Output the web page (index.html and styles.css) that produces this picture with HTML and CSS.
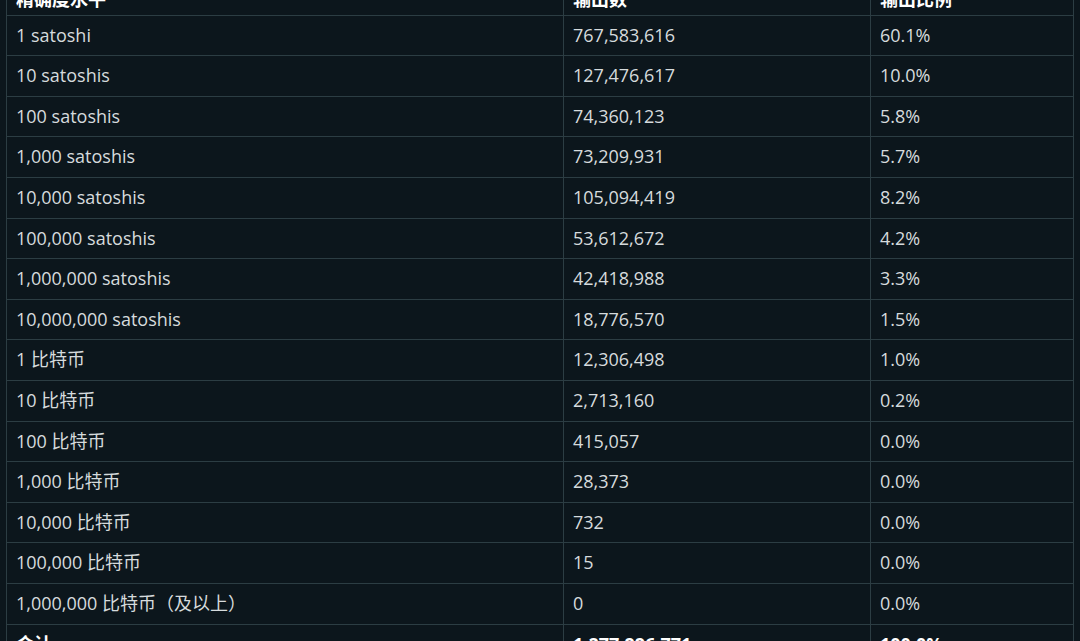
FILE: index.html
```html
<!DOCTYPE html>
<html lang="zh-CN">
<head>
    <meta charset="UTF-8">
    <meta name="viewport" content="width=device-width, initial-scale=1.0">
    <title>输出分布</title>
    <link rel="stylesheet" href="styles.css">
</head>
<body>
    <table class="outputs">
        <thead>
            <tr>
                <th class="col-size">精确度水平</th>
                <th class="col-count">输出数</th>
                <th class="col-share">输出比例</th>
            </tr>
        </thead>
        <tbody>
            <tr><td>1 satoshi</td><td>767,583,616</td><td>60.1%</td></tr>
            <tr><td>10 satoshis</td><td>127,476,617</td><td>10.0%</td></tr>
            <tr><td>100 satoshis</td><td>74,360,123</td><td>5.8%</td></tr>
            <tr><td>1,000 satoshis</td><td>73,209,931</td><td>5.7%</td></tr>
            <tr><td>10,000 satoshis</td><td>105,094,419</td><td>8.2%</td></tr>
            <tr><td>100,000 satoshis</td><td>53,612,672</td><td>4.2%</td></tr>
            <tr><td>1,000,000 satoshis</td><td>42,418,988</td><td>3.3%</td></tr>
            <tr><td>10,000,000 satoshis</td><td>18,776,570</td><td>1.5%</td></tr>
            <tr><td>1 比特币</td><td>12,306,498</td><td>1.0%</td></tr>
            <tr><td>10 比特币</td><td>2,713,160</td><td>0.2%</td></tr>
            <tr><td>100 比特币</td><td>415,057</td><td>0.0%</td></tr>
            <tr><td>1,000 比特币</td><td>28,373</td><td>0.0%</td></tr>
            <tr><td>10,000 比特币</td><td>732</td><td>0.0%</td></tr>
            <tr><td>100,000 比特币</td><td>15</td><td>0.0%</td></tr>
            <tr><td>1,000,000 比特币（及以上）</td><td>0</td><td>0.0%</td></tr>
        </tbody>
        <tfoot>
            <tr><td>合计</td><td>1,277,996,771</td><td>100.0%</td></tr>
        </tfoot>
    </table>
</body>
</html>
```

FILE: styles.css
```css
* {
    margin: 0;
    box-sizing: border-box;
}

body {
    background: #0c161c;
    color: #d6dbdd;
    font-family: 'Open Sans', 'Noto Sans CJK SC', sans-serif;
    font-size: 18px;
    overflow: hidden;
}

.outputs {
    border-collapse: collapse;
    width: 1068px;
    margin: -21px 0 0 6px;
    table-layout: fixed;
}

.outputs th,
.outputs td {
    border: 1px solid #2c3d43;
    text-align: left;
    padding: 8px 9px 8px 9px;
    line-height: 23.6px;
    font-weight: 400;
}

.outputs th {
    color: #ffffff;
    font-weight: 700;
    padding-top: 8px;
    padding-bottom: 3px;
}

.outputs tfoot td {
    color: #ffffff;
    font-weight: 700;
}

.col-size {
    width: 557px;
}

.col-count {
    width: 307px;
}
```
